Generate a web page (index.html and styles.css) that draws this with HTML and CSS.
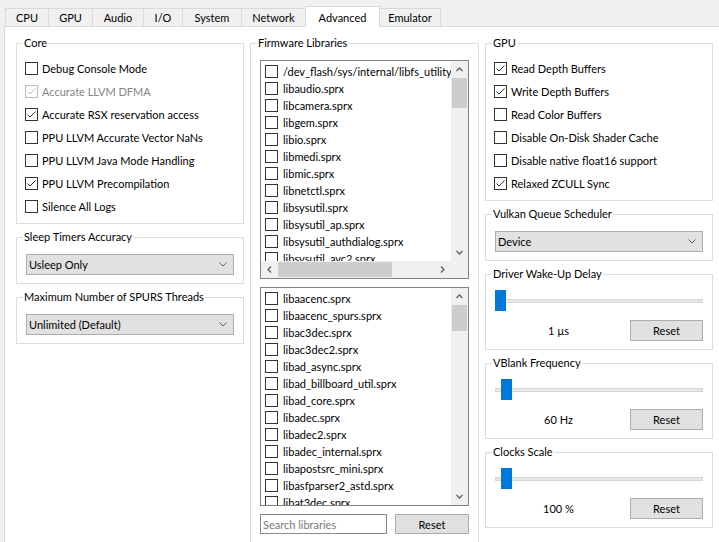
FILE: index.html
```html
<!DOCTYPE html>
<html>
<head>
<meta charset="utf-8">
<title>Settings - Advanced</title>
<link rel="stylesheet" href="styles.css">
</head>
<body>
<div class="tabs">
  <div class="tab">CPU</div>
  <div class="tab">GPU</div>
  <div class="tab">Audio</div>
  <div class="tab">I/O</div>
  <div class="tab">System</div>
  <div class="tab">Network</div>
  <div class="tab active">Advanced</div>
  <div class="tab">Emulator</div>
</div>
<div class="pane">
  <div class="col">
    <fieldset class="group">
      <legend>Core</legend>
      <div class="checks">
        <label class="check"><span class="cb"></span>Debug Console Mode</label>
        <label class="check disabled"><span class="cb"><svg viewBox="0 0 11 11"><polyline points="1.5,5.5 4,8 9.5,2.5"/></svg></span>Accurate LLVM DFMA</label>
        <label class="check"><span class="cb"><svg viewBox="0 0 11 11"><polyline points="1.5,5.5 4,8 9.5,2.5"/></svg></span>Accurate RSX reservation access</label>
        <label class="check"><span class="cb"></span>PPU LLVM Accurate Vector NaNs</label>
        <label class="check"><span class="cb"></span>PPU LLVM Java Mode Handling</label>
        <label class="check"><span class="cb"><svg viewBox="0 0 11 11"><polyline points="1.5,5.5 4,8 9.5,2.5"/></svg></span>PPU LLVM Precompilation</label>
        <label class="check"><span class="cb"></span>Silence All Logs</label>
      </div>
    </fieldset>
    <fieldset class="group">
      <legend>Sleep Timers Accuracy</legend>
      <div class="combo"><span>Usleep Only</span><svg class="chev" viewBox="0 0 8 5"><polyline points="0.5,0.5 4,4 7.5,0.5"/></svg></div>
    </fieldset>
    <fieldset class="group">
      <legend>Maximum Number of SPURS Threads</legend>
      <div class="combo"><span>Unlimited (Default)</span><svg class="chev" viewBox="0 0 8 5"><polyline points="0.5,0.5 4,4 7.5,0.5"/></svg></div>
    </fieldset>
  </div>

  <div class="col">
    <fieldset class="group">
      <legend>Firmware Libraries</legend>
      <div class="lists">
        <div class="list hbar">
          <div class="rows">
            <div class="row"><span class="cb"></span>/dev_flash/sys/internal/libfs_utility_init.sprx</div>
            <div class="row"><span class="cb"></span>libaudio.sprx</div>
            <div class="row"><span class="cb"></span>libcamera.sprx</div>
            <div class="row"><span class="cb"></span>libgem.sprx</div>
            <div class="row"><span class="cb"></span>libio.sprx</div>
            <div class="row"><span class="cb"></span>libmedi.sprx</div>
            <div class="row"><span class="cb"></span>libmic.sprx</div>
            <div class="row"><span class="cb"></span>libnetctl.sprx</div>
            <div class="row"><span class="cb"></span>libsysutil.sprx</div>
            <div class="row"><span class="cb"></span>libsysutil_ap.sprx</div>
            <div class="row"><span class="cb"></span>libsysutil_authdialog.sprx</div>
            <div class="row"><span class="cb"></span>libsysutil_avc2.sprx</div>
            <div class="row"><span class="cb"></span>libsysutil_avc_ext.sprx</div>
            <div class="row"><span class="cb"></span>libsysutil_game.sprx</div>
          </div>
          <div class="vscroll">
            <div class="arrow"><svg viewBox="0 0 7 5"><polyline points="0.5,4 3.5,1 6.5,4"/></svg></div>
            <div class="vthumb" style="height:30px"></div>
            <div class="fill"></div>
            <div class="arrow"><svg viewBox="0 0 7 5"><polyline points="0.5,1 3.5,4 6.5,1"/></svg></div>
          </div>
          <div class="hscroll">
            <div class="arrow"><svg class="side" viewBox="0 0 5 7"><polyline points="4,0.5 1,3.5 4,6.5"/></svg></div>
            <div class="hthumb" style="width:114px"></div>
            <div class="fill"></div>
            <div class="arrow"><svg class="side" viewBox="0 0 5 7"><polyline points="1,0.5 4,3.5 1,6.5"/></svg></div>
          </div>
          <div class="corner"></div>
        </div>
        <div class="list">
          <div class="rows">
            <div class="row"><span class="cb"></span>libaacenc.sprx</div>
            <div class="row"><span class="cb"></span>libaacenc_spurs.sprx</div>
            <div class="row"><span class="cb"></span>libac3dec.sprx</div>
            <div class="row"><span class="cb"></span>libac3dec2.sprx</div>
            <div class="row"><span class="cb"></span>libad_async.sprx</div>
            <div class="row"><span class="cb"></span>libad_billboard_util.sprx</div>
            <div class="row"><span class="cb"></span>libad_core.sprx</div>
            <div class="row"><span class="cb"></span>libadec.sprx</div>
            <div class="row"><span class="cb"></span>libadec2.sprx</div>
            <div class="row"><span class="cb"></span>libadec_internal.sprx</div>
            <div class="row"><span class="cb"></span>libapostsrc_mini.sprx</div>
            <div class="row"><span class="cb"></span>libasfparser2_astd.sprx</div>
            <div class="row"><span class="cb"></span>libat3dec.sprx</div>
            <div class="row"><span class="cb"></span>libat3multidec.sprx</div>
          </div>
          <div class="vscroll">
            <div class="arrow"><svg viewBox="0 0 7 5"><polyline points="0.5,4 3.5,1 6.5,4"/></svg></div>
            <div class="vthumb" style="height:26px"></div>
            <div class="fill"></div>
            <div class="arrow"><svg viewBox="0 0 7 5"><polyline points="0.5,1 3.5,4 6.5,1"/></svg></div>
          </div>
        </div>
      </div>
      <div class="search">
        <input type="text" placeholder="Search libraries">
        <button class="btn search-btn">Reset</button>
      </div>
    </fieldset>
  </div>

  <div class="col">
    <fieldset class="group">
      <legend>GPU</legend>
      <div class="checks">
        <label class="check"><span class="cb"><svg viewBox="0 0 11 11"><polyline points="1.5,5.5 4,8 9.5,2.5"/></svg></span>Read Depth Buffers</label>
        <label class="check"><span class="cb"><svg viewBox="0 0 11 11"><polyline points="1.5,5.5 4,8 9.5,2.5"/></svg></span>Write Depth Buffers</label>
        <label class="check"><span class="cb"></span>Read Color Buffers</label>
        <label class="check"><span class="cb"></span>Disable On-Disk Shader Cache</label>
        <label class="check"><span class="cb"></span>Disable native float16 support</label>
        <label class="check"><span class="cb"><svg viewBox="0 0 11 11"><polyline points="1.5,5.5 4,8 9.5,2.5"/></svg></span>Relaxed ZCULL Sync</label>
      </div>
    </fieldset>
    <fieldset class="group">
      <legend>Vulkan Queue Scheduler</legend>
      <div class="combo"><span>Device</span><svg class="chev" viewBox="0 0 8 5"><polyline points="0.5,0.5 4,4 7.5,0.5"/></svg></div>
    </fieldset>
    <fieldset class="group">
      <legend>Driver Wake-Up Delay</legend>
      <div class="slider"><div class="track"></div><div class="thumb" style="left:0px"></div></div>
      <div class="value-row"><span class="value">1 µs</span><button class="btn">Reset</button></div>
    </fieldset>
    <fieldset class="group">
      <legend>VBlank Frequency</legend>
      <div class="slider"><div class="track"></div><div class="thumb" style="left:6px"></div></div>
      <div class="value-row"><span class="value">60 Hz</span><button class="btn">Reset</button></div>
    </fieldset>
    <fieldset class="group">
      <legend>Clocks Scale</legend>
      <div class="slider"><div class="track"></div><div class="thumb" style="left:6px"></div></div>
      <div class="value-row"><span class="value">100 %</span><button class="btn">Reset</button></div>
    </fieldset>
  </div>
</div>
</body>
</html>
```

FILE: styles.css
```css
* { box-sizing: border-box; }
html, body { margin: 0; padding: 0; }
body {
  background: #f0f0f0;
  font-family: Lato, "Liberation Sans", sans-serif;
  font-size: 11px;
  color: #000;
  width: 719px;
  height: 542px;
  overflow: hidden;
  padding: 6px 0 0 4px;
  -webkit-font-smoothing: none;
}

/* Tabs */
.tabs { display: flex; align-items: flex-end; height: 20px; padding-left: 1px; }
.tab {
  height: 18px;
  border: 1px solid #d9d9d9;
  border-bottom: none;
  margin-right: -1px;
  background: #f0f0f0;
  display: flex;
  align-items: center;
  justify-content: center;
  flex: none;
}
.tab.active { height: 21px; margin-bottom: -1px; background: #fff; position: relative; z-index: 1; }
.tab:nth-child(1) { width: 44px; }
.tab:nth-child(2) { width: 45px; }
.tab:nth-child(3) { width: 52px; }
.tab:nth-child(4) { width: 40px; }
.tab:nth-child(5) { width: 60px; }
.tab:nth-child(6) { width: 65px; }
.tab:nth-child(7) { width: 75px; }
.tab:nth-child(8) { width: 62px; }

/* Pane */
.pane {
  width: 740px;
  height: 600px;
  background: #fff;
  border: 1px solid #d9d9d9;
  padding: 8px 11px;
  display: grid;
  grid-template-columns: 228px 229px 228px;
  column-gap: 6px;
  align-items: start;
}
.col { display: flex; flex-direction: column; gap: 5px; }

/* Group boxes */
.group {
  margin: 0;
  min-width: 0;
  border: 1px solid #dcdcdc;
  padding: 9px 9px 8px;
}
.group legend {
  padding: 0 1px;
  margin-left: -3px;
  height: 16px;
  line-height: 16px;
}

/* Checkboxes */
.checks { display: flex; flex-direction: column; gap: 6px; margin-left: -1px; }
.check { display: flex; align-items: center; gap: 4px; height: 17px; white-space: nowrap; }
.cb {
  width: 13px;
  height: 13px;
  flex: none;
  border: 1px solid #333;
  background: #fff;
  color: #333;
  display: flex;
  align-items: center;
  justify-content: center;
}
.cb svg { width: 11px; height: 11px; fill: none; stroke: currentColor; stroke-width: 1; }
.check.disabled { color: #838383; }
.check.disabled .cb { border-color: #bcbcbc; color: #bcbcbc; }

/* Combo boxes */
.combo {
  height: 21px;
  border: 1px solid #adadad;
  background: #e1e1e1;
  display: flex;
  align-items: center;
  justify-content: space-between;
  padding: 0 6px 0 2px;
}
.chev { width: 8px; height: 5px; fill: none; stroke: #606060; stroke-width: 1; }

/* Lists */
.lists { display: flex; flex-direction: column; gap: 8px; }
.list {
  height: 219px;
  border: 1px solid #828282;
  background: #fff;
  display: grid;
  grid-template-columns: minmax(0, 1fr) 17px;
  grid-template-rows: minmax(0, 1fr);
}
.list.hbar { grid-template-rows: minmax(0, 1fr) 17px; }
.rows { overflow: hidden; padding-top: 2px; min-width: 0; }
.row { display: flex; align-items: center; gap: 5px; height: 17px; padding-left: 4px; white-space: nowrap; }

.vscroll { background: #f0f0f0; display: flex; flex-direction: column; }
.hscroll { background: #f0f0f0; display: flex; }
.corner { background: #f0f0f0; }
.arrow { flex: none; width: 17px; height: 17px; display: flex; align-items: center; justify-content: center; }
.arrow svg { width: 7px; height: 5px; fill: none; stroke: #606060; stroke-width: 1.3; }
.arrow svg.side { width: 5px; height: 7px; }
.vthumb { flex: none; background: #cdcdcd; margin: 0 1px; }
.hthumb { flex: none; background: #cdcdcd; margin: 1px 0; }
.fill { flex: 1; }

/* Search */
.search { display: flex; gap: 8px; margin-top: 8px; }
.search input {
  width: 127px;
  height: 20px;
  border: 1px solid #8a8a8a;
  font: inherit;
  padding: 0 2px;
  margin: 0;
  outline: none;
}
.search input::placeholder { color: #7a7a7a; }

.btn {
  height: 21px;
  width: 73px;
  border: 1px solid #adadad;
  background: #e1e1e1;
  font: inherit;
  color: #000;
  padding: 0;
  margin: 0;
  display: flex;
  align-items: center;
  justify-content: center;
}
.search-btn { width: 74px; height: 20px; }

/* Sliders */
.slider { position: relative; height: 21px; margin-top: -1px; display: flex; align-items: center; }
.track { flex: 1; height: 4px; background: #e7e7e7; border: 1px solid #d6d6d6; }
.thumb { position: absolute; top: 0; width: 11px; height: 21px; background: #0078d7; }
.value-row { display: flex; gap: 8px; margin-top: 9px; align-items: center; }
.value { flex: 1; text-align: center; }
```
